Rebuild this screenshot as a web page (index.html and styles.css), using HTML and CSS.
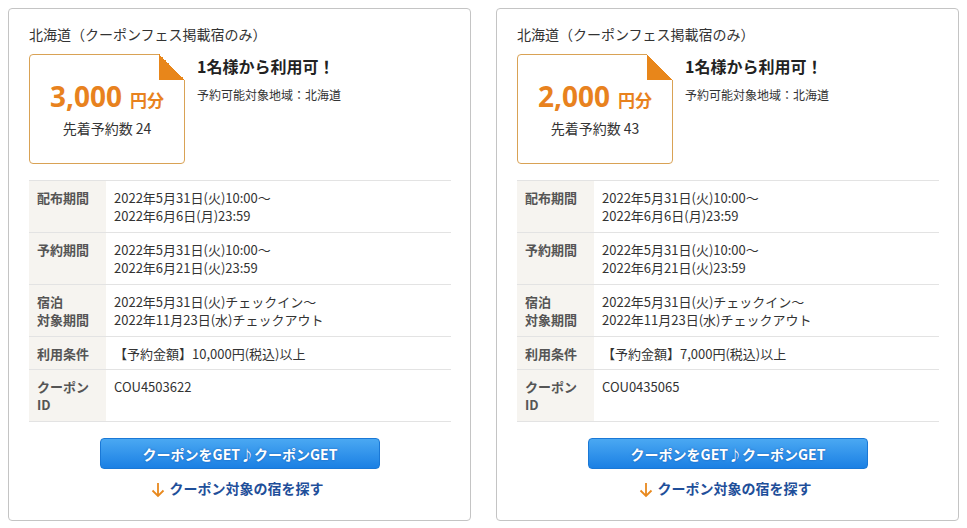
FILE: index.html
```html
<!DOCTYPE html>
<html lang="ja">
<head>
<meta charset="utf-8">
<link rel="stylesheet" href="styles.css">
</head>
<body>
<div class="wrap">
  <div class="card">
    <h2 class="title">北海道（クーポンフェス掲載宿のみ）</h2>
    <div class="head">
      <div class="coupon">
        <span class="fold"></span>
        <div class="amount"><span class="num">3,000</span><span class="unit">円分</span></div>
        <div class="count">先着予約数 24</div>
      </div>
      <div class="info">
        <p class="catch">1名様から利用可！</p>
        <p class="area">予約可能対象地域：北海道</p>
      </div>
    </div>
    <table class="detail">
      <tr><th>配布期間</th><td>2022年5月31日(火)10:00～<br>2022年6月6日(月)23:59</td></tr>
      <tr><th>予約期間</th><td>2022年5月31日(火)10:00～<br>2022年6月21日(火)23:59</td></tr>
      <tr><th>宿泊<br>対象期間</th><td>2022年5月31日(火)チェックイン～<br>2022年11月23日(水)チェックアウト</td></tr>
      <tr><th>利用条件</th><td>【予約金額】10,000円(税込)以上</td></tr>
      <tr><th>クーポン<br>ID</th><td>COU4503622</td></tr>
    </table>
    <button class="get">クーポンをGET♪クーポンGET</button>
    <a class="find" href="#"><svg class="arrow" width="14" height="16" viewBox="0 0 14 16"><path d="M7 1V14M1.5 8.5L7 14L12.5 8.5" fill="none" stroke="#e8891e" stroke-width="1.8"/></svg>クーポン対象の宿を探す</a>
  </div>
  <div class="card">
    <h2 class="title">北海道（クーポンフェス掲載宿のみ）</h2>
    <div class="head">
      <div class="coupon">
        <span class="fold"></span>
        <div class="amount"><span class="num">2,000</span><span class="unit">円分</span></div>
        <div class="count">先着予約数 43</div>
      </div>
      <div class="info">
        <p class="catch">1名様から利用可！</p>
        <p class="area">予約可能対象地域：北海道</p>
      </div>
    </div>
    <table class="detail">
      <tr><th>配布期間</th><td>2022年5月31日(火)10:00～<br>2022年6月6日(月)23:59</td></tr>
      <tr><th>予約期間</th><td>2022年5月31日(火)10:00～<br>2022年6月21日(火)23:59</td></tr>
      <tr><th>宿泊<br>対象期間</th><td>2022年5月31日(火)チェックイン～<br>2022年11月23日(水)チェックアウト</td></tr>
      <tr><th>利用条件</th><td>【予約金額】7,000円(税込)以上</td></tr>
      <tr><th>クーポン<br>ID</th><td>COU0435065</td></tr>
    </table>
    <button class="get">クーポンをGET♪クーポンGET</button>
    <a class="find" href="#"><svg class="arrow" width="14" height="16" viewBox="0 0 14 16"><path d="M7 1V14M1.5 8.5L7 14L12.5 8.5" fill="none" stroke="#e8891e" stroke-width="1.8"/></svg>クーポン対象の宿を探す</a>
  </div>
</div>
</body>
</html>
```
FILE: styles.css
```css
* { box-sizing: border-box; }
body {
  margin: 8px;
  background: #fff;
  font-family: "Noto Sans CJK JP", "Noto Sans", sans-serif;
  color: #333;
}
.wrap {
  display: grid;
  grid-template-columns: 463px 463px;
  column-gap: 25px;
}
.card {
  height: 513px;
  border: 1px solid #c4c4c4;
  border-radius: 4px;
  padding: 15px 19px 0 20px;
  display: flex;
  flex-direction: column;
  align-items: stretch;
}
.title {
  margin: 0;
  font-size: 14px;
  font-weight: normal;
  line-height: 20px;
  color: #333;
}
.head {
  display: flex;
  margin-top: 10px;
}
.coupon {
  position: relative;
  width: 156px;
  height: 110px;
  border: 1px solid #d9a255;
  border-radius: 4px;
  background: #fff;
  display: flex;
  flex-direction: column;
  align-items: center;
  padding-top: 25px;
  flex: none;
}
.fold {
  position: absolute;
  top: -1px;
  right: -1px;
  width: 26px;
  height: 26px;
  background: linear-gradient(to bottom left, #fff 50%, #e8861a 50%);
}
.amount {
  color: #e8821e;
  font-weight: bold;
  line-height: 32px;
  white-space: nowrap;
}
.num {
  font-family: "Noto Sans", sans-serif;
  font-size: 28px;
}
.unit {
  font-size: 17px;
  margin-left: 8px;
}
.count {
  font-size: 14px;
  line-height: 20px;
  margin-top: 2px;
  color: #333;
}
.info {
  margin-left: 12px;
}
.catch {
  margin: 1px 0 0;
  font-size: 16px;
  font-weight: bold;
  line-height: 22px;
  color: #222;
}
.area {
  margin: 9px 0 0;
  font-size: 12px;
  line-height: 18px;
  color: #333;
}
.detail {
  margin-top: 16px;
  width: 100%;
  border-collapse: collapse;
  font-size: 13px;
  line-height: 18px;
}
.detail tr {
  border-top: 1px solid #e3e3e3;
  border-bottom: 1px solid #e3e3e3;
}
.detail th {
  width: 77px;
  background: #f6f4f0;
  text-align: left;
  font-weight: bold;
  color: #555;
  padding: 8px 0 7px 8px;
  vertical-align: top;
}
.detail td {
  padding: 8px 0 7px 8px;
  vertical-align: top;
  color: #333;
}
.detail tr:nth-child(4) th,
.detail tr:nth-child(4) td {
  padding-bottom: 6px;
}
.get {
  align-self: center;
  margin-top: 16px;
  width: 280px;
  height: 31px;
  border: 1px solid #1a78d6;
  border-radius: 4px;
  background: linear-gradient(#4aa8f2, #1b80e4);
  color: #fff;
  font-family: inherit;
  font-size: 14px;
  font-weight: bold;
  text-shadow: 0 0 2px rgba(0,40,120,0.5);
  padding: 0;
}
.find {
  align-self: center;
  margin-top: 9px;
  display: flex;
  align-items: center;
  color: #1f4f9a;
  font-size: 14px;
  font-weight: bold;
  line-height: 20px;
  text-decoration: none;
  margin-left: -6px;
}
.arrow {
  margin-right: 5px;
  margin-top: 4px;
}
```
